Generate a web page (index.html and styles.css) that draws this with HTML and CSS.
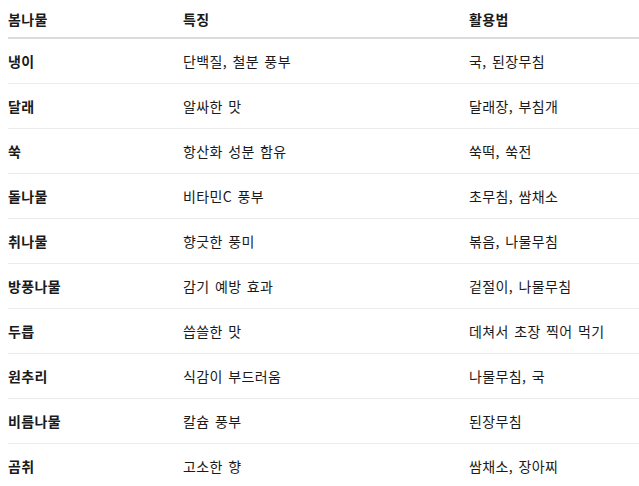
FILE: index.html
```html
<!DOCTYPE html>
<html lang="ko">
<head>
<meta charset="utf-8">
<link rel="stylesheet" href="styles.css">
</head>
<body>
<table class="tbl">
  <thead>
    <tr><th class="c1">봄나물</th><th class="c2">특징</th><th class="c3">활용법</th></tr>
  </thead>
  <tbody>
    <tr><td class="name">냉이</td><td>단백질, 철분 풍부</td><td>국, 된장무침</td></tr>
    <tr><td class="name">달래</td><td>알싸한 맛</td><td>달래장, 부침개</td></tr>
    <tr><td class="name">쑥</td><td>항산화 성분 함유</td><td>쑥떡, 쑥전</td></tr>
    <tr><td class="name">돌나물</td><td>비타민C 풍부</td><td>초무침, 쌈채소</td></tr>
    <tr><td class="name">취나물</td><td>향긋한 풍미</td><td>볶음, 나물무침</td></tr>
    <tr><td class="name">방풍나물</td><td>감기 예방 효과</td><td>겉절이, 나물무침</td></tr>
    <tr><td class="name">두릅</td><td>씁쓸한 맛</td><td>데쳐서 초장 찍어 먹기</td></tr>
    <tr><td class="name">원추리</td><td>식감이 부드러움</td><td>나물무침, 국</td></tr>
    <tr><td class="name">비름나물</td><td>칼슘 풍부</td><td>된장무침</td></tr>
    <tr><td class="name">곰취</td><td>고소한 향</td><td>쌈채소, 장아찌</td></tr>
  </tbody>
</table>
</body>
</html>
```
FILE: styles.css
```css
html, body {
  margin: 0;
  padding: 0;
  background: #fff;
  overflow: hidden;
}
body {
  padding-left: 8px;
  font-family: "Noto Sans CJK KR", "Noto Sans", sans-serif;
  font-size: 14px;
  letter-spacing: 0.4px;
  word-spacing: 1px;
  color: #1a1a1a;
}
.tbl {
  border-collapse: collapse;
  width: 640px;
  table-layout: fixed;
}
.tbl th, .tbl td {
  padding: 0;
  text-align: left;
  vertical-align: middle;
  white-space: nowrap;
}
.tbl th {
  height: 37px;
  font-weight: 700;
  border-bottom: 2px solid #dcdcdc;
}
.tbl td {
  height: 44px;
  border-bottom: 1px solid #ececec;
}
.c1 { width: 175px; }
.c2 { width: 286px; }
.tbl .name { font-weight: 700; }
```
